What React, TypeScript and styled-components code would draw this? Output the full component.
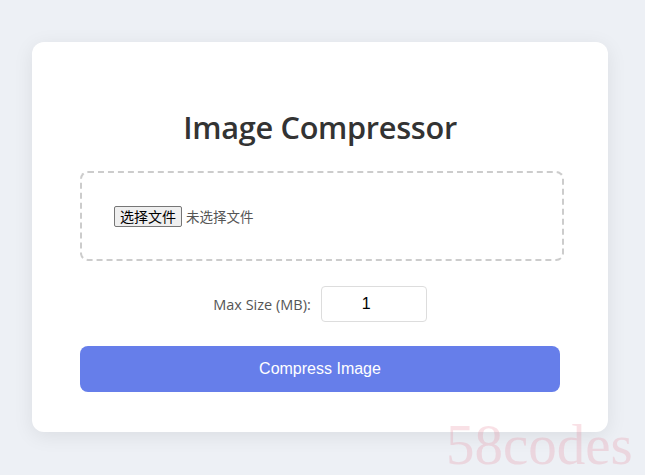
import styled, { createGlobalStyle } from 'styled-components';

const GlobalStyle = createGlobalStyle`
  html, body {
    margin: 0;
    padding: 0;
    background: #edf0f5;
  }
  body {
    font-family: "Segoe UI", "Open Sans", "Noto Sans", sans-serif;
  }
`;

const Page = styled.div`
  position: relative;
  width: 645px;
  height: 475px;
  padding: 42px 37px 0 32px;
  box-sizing: border-box;
  overflow: hidden;
`;

const Card = styled.div`
  width: 576px;
  height: 390px;
  box-sizing: border-box;
  background: #fff;
  border-radius: 12px;
  box-shadow: 0 4px 20px rgba(0, 0, 0, 0.08);
  padding: 63px 48px 0;
`;

const Title = styled.h1`
  margin: 0 0 22px;
  text-align: center;
  font-family: "Open Sans", sans-serif;
  font-size: 30.7px;
  font-weight: 600;
  color: #333;
  letter-spacing: -0.3px;
  line-height: 44px;
`;

const DropZone = styled.div`
  width: calc(100% + 4px);
  height: 90px;
  box-sizing: border-box;
  border: 2px dashed #ccc;
  border-radius: 8px;
  display: flex;
  align-items: center;
  padding: 0 32px;
`;

const HiddenInput = styled.input`
  display: none;
`;

const FileButton = styled.label`
  display: inline-flex;
  align-items: center;
  height: 21px;
  box-sizing: border-box;
  padding: 0 5px;
  background: #efefef;
  border: 1px solid #767676;
  border-radius: 2px;
  font-family: "Noto Sans CJK SC", sans-serif;
  font-size: 14px;
  color: #000;
`;

const FileStatus = styled.span`
  margin-left: 4px;
  font-family: "Noto Sans CJK SC", sans-serif;
  font-size: 13.5px;
  color: #555;
`;

const SizeRow = styled.div`
  margin-top: 25px;
  display: flex;
  align-items: center;
  justify-content: center;
  gap: 10px;
`;

const SizeLabel = styled.label`
  font-family: "Open Sans", sans-serif;
  font-size: 14.5px;
  color: #555;
`;

const SizeInput = styled.input`
  width: 106px;
  height: 36px;
  box-sizing: border-box;
  border: 1px solid #ddd;
  border-radius: 4px;
  text-align: center;
  font-family: "Liberation Sans", Arial, sans-serif;
  font-size: 16px;
  color: #000;
  outline: none;
`;

const CompressButton = styled.button`
  margin-top: 24px;
  width: 100%;
  height: 46px;
  border: none;
  border-radius: 8px;
  background: #667eea;
  color: #fff;
  font-family: "Liberation Sans", Arial, sans-serif;
  font-size: 16px;
  cursor: pointer;
`;

const Watermark = styled.div`
  position: absolute;
  left: 446px;
  top: 412px;
  font-family: "Liberation Serif", serif;
  font-size: 57px;
  line-height: 65px;
  color: rgba(232, 140, 160, 0.26);
  pointer-events: none;
`;

export default function App() {
  return (
    <>
      <GlobalStyle />
      <Page>
        <Card>
          <Title>Image Compressor</Title>
          <DropZone>
            <HiddenInput type="file" id="file" accept="image/*" />
            <FileButton htmlFor="file">选择文件</FileButton>
            <FileStatus>未选择文件</FileStatus>
          </DropZone>
          <SizeRow>
            <SizeLabel htmlFor="size">Max Size (MB):</SizeLabel>
            <SizeInput id="size" type="number" defaultValue={1} />
          </SizeRow>
          <CompressButton>Compress Image</CompressButton>
        </Card>
        <Watermark>58codes</Watermark>
      </Page>
    </>
  );
}
